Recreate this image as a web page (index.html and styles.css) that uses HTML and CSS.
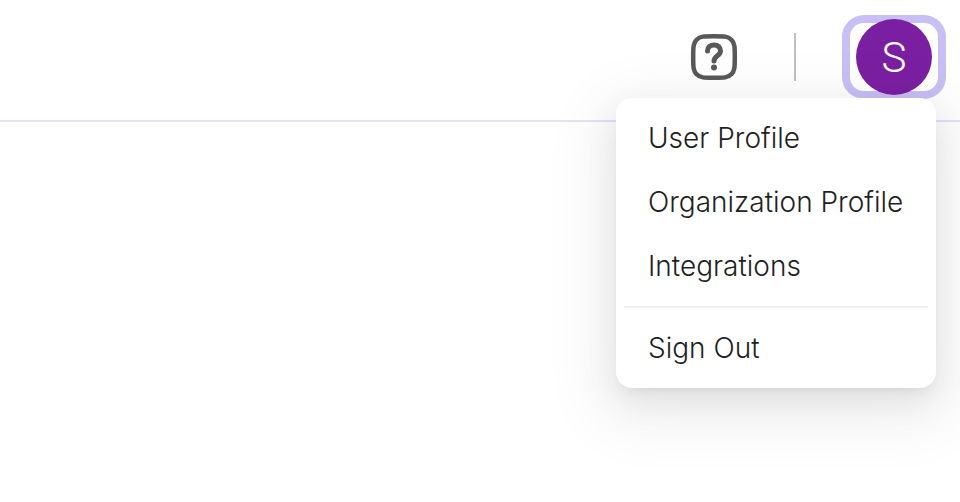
FILE: index.html
```html
<!DOCTYPE html>
<html lang="en">
<head>
    <meta charset="UTF-8">
    <meta name="viewport" content="width=device-width, initial-scale=1.0">
    <title>Account</title>
    <link rel="stylesheet" href="styles.css">
</head>
<body>

    <header class="topbar">
        <button class="help-btn" type="button" aria-label="Help">
            <svg viewBox="0 0 48 48" fill="none" stroke="#595959" stroke-width="4.5" stroke-linecap="round" stroke-linejoin="round">
                <path d="M24 3.2 C34 3.2 38 3.2 41.3 6.7 C44.8 10 44.8 14 44.8 24 C44.8 34 44.8 38 41.3 41.3 C38 44.8 34 44.8 24 44.8 C14 44.8 10 44.8 6.700 41.3 C3.2 38 3.2 34 3.2 24 C3.2 14 3.2 10 6.7 6.7 C10 3.2 14 3.2 24 3.2 Z" />
                <path d="M17.5 18 C17.5 14 20.5 12 24 12 C28 12 30.5 14.500 30.5 18 C30.5 23 24 22.500 24 28" stroke-width="5" />
                <circle cx="24" cy="34.5" r="3" fill="#595959" stroke="none" />
            </svg>
        </button>

        <span class="separator"></span>

        <!-- Account button and its menu -->
        <div class="account">
            <button class="avatar-btn" type="button" aria-label="Account menu" aria-expanded="true">
                <span class="avatar">S</span>
            </button>
            <nav class="menu">
                <a class="menu-item" href="#">User Profile</a>
                <a class="menu-item" href="#">Organization Profile</a>
                <a class="menu-item" href="#">Integrations</a>
                <hr class="menu-divider">
                <a class="menu-item" href="#">Sign Out</a>
            </nav>
        </div>
    </header>

</body>
</html>
```
FILE: styles.css
```css
* {
    box-sizing: border-box;
}

body {
    min-height: 100vh;
    margin: 0;
    background-color: #ffffff;
    color: #1f1f1f;
    font-family: Inter, sans-serif;
}

.topbar {
    display: flex;
    align-items: center;
    justify-content: flex-end;
    padding: 23px 22px 29px;
    border-bottom: 2px solid #e4e1fa;
}

button {
    padding: 0;
    border: none;
    background: none;
    cursor: pointer;
}

.help-btn {
    width: 48px;
    height: 48px;
}

.help-btn svg {
    display: block;
    width: 100%;
    height: 100%;
}

.separator {
    width: 2px;
    height: 48px;
    margin: 0 54px 0 56px;
    background-color: #bfbfbf;
}

.account {
    position: relative;
}

/* Focus ring around the avatar */
.avatar-btn {
    display: flex;
    align-items: center;
    justify-content: center;
    width: 88px;
    height: 68px;
    border-radius: 14px;
    box-shadow: 0 0 0 8px #c8c0f5;
}

.avatar {
    flex: none;
    width: 76px;
    height: 76px;
    border-radius: 50%;
    background-color: #7b1fa2;
    color: #ffffff;
    font-family: Roboto, sans-serif;
    font-size: 42px;
    font-weight: 300;
    line-height: 78px;
}

.menu {
    position: absolute;
    top: 75px;
    right: 2px;
    width: 320px;
    padding: 8px;
    border-radius: 16px;
    background-color: #ffffff;
    box-shadow: 0 12px 32px rgba(0, 0, 0, 0.08),
                0 6px 12px -8px rgba(0, 0, 0, 0.12),
                0 18px 60px 20px rgba(0, 0, 0, 0.06);
}

.menu-item {
    display: block;
    padding: 0 24px;
    color: #1f1f1f;
    font-size: 28px;
    font-weight: 300;
    line-height: 64px;
    text-decoration: none;
    white-space: nowrap;
}

.menu-divider {
    height: 2px;
    margin: 8px 0;
    border: none;
    background-color: #f0f0f0;
}
```
